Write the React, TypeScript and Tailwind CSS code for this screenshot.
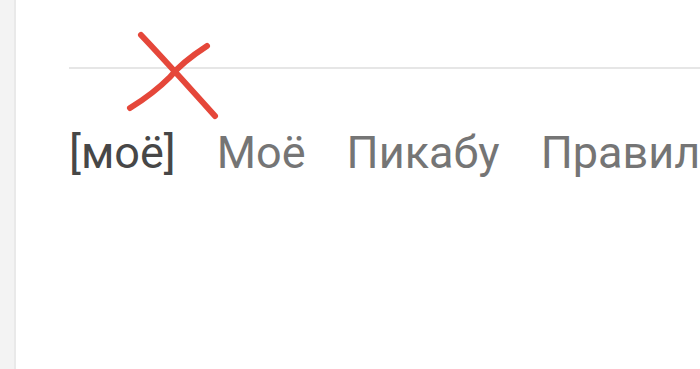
import React from "react";

const tabs = ["Моё", "Пикабу", "Правила"];

const App: React.FC = () => {
  return (
    <div className="flex h-[369px] w-[700px] overflow-hidden bg-white">
      <div className="w-[16px] shrink-0 border-r-2 border-[#e9e9e9] bg-[#f3f3f3]" />
      <div className="relative min-w-0 flex-1 pl-[53px] pt-[67px]">
        <div className="h-[2px] bg-[#e6e6e6]" />
        <div
          className="mt-[61px] flex gap-[41px] whitespace-nowrap text-[45px] leading-none text-[#757575]"
          style={{ fontFamily: "Roboto, 'Noto Sans', sans-serif" }}
        >
          <span className="text-[#474747]">[моё]</span>
          {tabs.map((t) => (
            <span key={t}>{t}</span>
          ))}
        </div>
        {/* red cross drawn over the old tab */}
        <svg
          className="absolute left-[104px] top-[25px]"
          width="110"
          height="100"
          viewBox="0 0 110 100"
          fill="none"
        >
          <path
            d="M21 10 C40 30 60 52 95 91"
            stroke="#e5473a"
            strokeWidth="6"
            strokeLinecap="round"
          />
          <path
            d="M87 21 C70 32 58 42 50 52 C40 62 28 72 10 83"
            stroke="#e5473a"
            strokeWidth="6"
            strokeLinecap="round"
          />
        </svg>
      </div>
    </div>
  );
};

export default App;
